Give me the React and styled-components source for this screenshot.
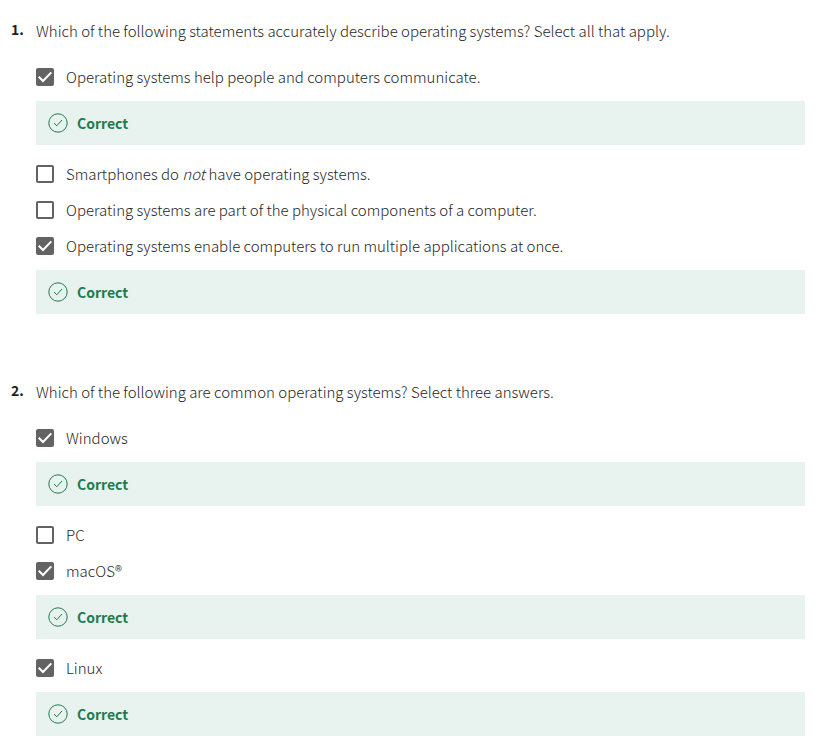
import React, { useState } from "react";
import styled, { createGlobalStyle } from "styled-components";

const GlobalStyle = createGlobalStyle`
  * { box-sizing: border-box; }
  body {
    margin: 0;
    background: #fff;
    color: #1f1f1f;
    font-family: "Source Sans Pro", "Noto Sans CJK SC", "Noto Sans", sans-serif;
    font-size: 15px;
    font-weight: 300;
    line-height: 20px;
  }
`;

const Quiz = styled.main`
  display: flex;
  flex-direction: column;
  gap: 57px;
  padding: 21px 17px 4px 11px;
`;

const Question = styled.section`
  display: grid;
  grid-template-columns: 25px minmax(0, 1fr);
`;

const Number = styled.span`
  font-size: 14px;
  font-weight: 700;
  line-height: 16px;
`;

const Options = styled.fieldset`
  min-width: 0;
  margin: 0;
  padding: 0;
  border: 0;
`;

const Prompt = styled.legend`
  padding: 0;
  margin-bottom: 18px;
`;

const Option = styled.label`
  display: flex;
  align-items: center;
  height: 36px;
  gap: 12px;
  cursor: pointer;
`;

const BoxWrap = styled.span`
  display: grid;
  width: 18px;
  height: 18px;
  > * { grid-area: 1 / 1; }
`;

const Box = styled.input`
  appearance: none;
  width: 18px;
  height: 18px;
  margin: 0;
  border: 2px solid #636363;
  border-radius: 2px;
  background: #fff;
  &:checked { background: #636363; }
`;

const Tick = styled.svg`
  width: 18px;
  height: 18px;
  pointer-events: none;
`;

const Feedback = styled.div`
  display: flex;
  align-items: center;
  gap: 9px;
  height: 44px;
  margin: 6px 0 11px;
  padding: 0 12px;
  background: #e8f2ee;
  color: #1d7c50;
  font-size: 14px;
  font-weight: 700;
`;

const questions = [
  {
    prompt: "Which of the following statements accurately describe operating systems? Select all that apply.",
    options: [
      { text: "Operating systems help people and computers communicate.", on: true },
      { text: <>Smartphones do <em>not</em> have operating systems.</> },
      { text: "Operating systems are part of the physical components of a computer." },
      { text: "Operating systems enable computers to run multiple applications at once.", on: true },
    ],
  },
  {
    prompt: "Which of the following are common operating systems? Select three answers.",
    options: [
      { text: "Windows", on: true },
      { text: "PC" },
      { text: "macOS®", on: true },
      { text: "Linux", on: true },
    ],
  },
];

function Answer({ text, on = false }) {
  const [checked, setChecked] = useState(on);
  return (
    <>
      <Option>
        <BoxWrap>
          <Box type="checkbox" checked={checked} onChange={(e) => setChecked(e.target.checked)} />
          {checked && (
            <Tick viewBox="0 0 18 18" fill="none" stroke="#fff" strokeWidth="2" aria-hidden="true">
              <path d="M2.7 8.8l4.3 4.2 8.3-8.6" />
            </Tick>
          )}
        </BoxWrap>
        <span>{text}</span>
      </Option>
      {on && (
        <Feedback>
          <svg width="20" height="20" viewBox="0 0 20 20" fill="none" stroke="#1d7c50" aria-hidden="true">
            <circle cx="10" cy="10" r="9.2" />
            <path d="M6 10l2.8 2.8L14 7" />
          </svg>
          Correct
        </Feedback>
      )}
    </>
  );
}

export default function App() {
  return (
    <>
      <GlobalStyle />
      <Quiz>
        {questions.map((q, i) => (
          <Question key={q.prompt}>
            <Number>{i + 1}.</Number>
            <Options>
              <Prompt>{q.prompt}</Prompt>
              {q.options.map((o, j) => <Answer key={j} {...o} />)}
            </Options>
          </Question>
        ))}
      </Quiz>
    </>
  );
}
